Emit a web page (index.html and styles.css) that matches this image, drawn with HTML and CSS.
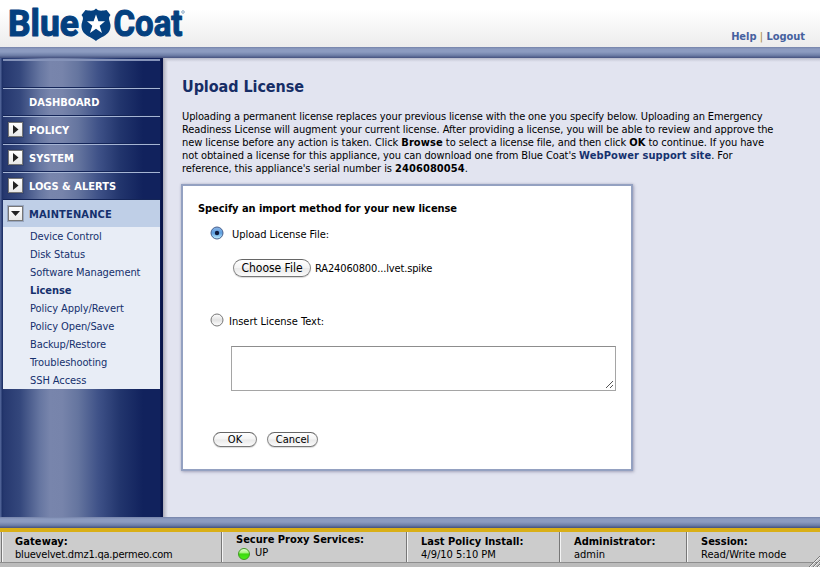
FILE: index.html
```html
<!DOCTYPE html>
<html lang="en">
<head>
<meta charset="utf-8">
<title>Upload License</title>
<link rel="stylesheet" href="styles.css">
</head>
<body>
<header class="header">
  <svg class="logo" width="190" height="47" viewBox="0 0 190 47">
    <g class="logo-type">
      <text x="8" y="36.3" textLength="71" lengthAdjust="spacingAndGlyphs">Blue</text>
      <text x="113.500" y="36.300" textLength="69" lengthAdjust="spacingAndGlyphs">Coat</text>
    </g>
    <path class="shield" d="M96 8.500C94 11 91.500 10.800 88 10.500L85.500 10L81.500 15C84.500 18 82 21 81.500 25C81 35 90 36 96 41C102 36 111 35 110.500 25C110 21 107.500 18 110.500 15L106.500 10L104 10.500C100.500 10.800 98 11 96 8.500Z"/>
    <path class="star" d="M96 14.500L98.400 21.300H105L99.700 25.800L102 33L96 28.700L90 33L92.300 25.800L87 21.300H93.600Z"/>
    <circle class="reg" cx="183" cy="12" r="1.300"/>
  </svg>
  <nav class="account"><a>Help</a> <i>|</i> <a>Logout</a></nav>
</header>
<div class="bar"></div>
<div class="body">
  <aside class="sidebar">
    <div class="nav">
      <div class="nav-top"></div>
      <div class="row"><span class="no-toggle"></span>DASHBOARD</div>
      <div class="row"><svg class="toggle" width="15" height="15"><path d="M5 3L10.500 7.500L5 12Z"/></svg>POLICY</div>
      <div class="row"><svg class="toggle" width="15" height="15"><path d="M5 3L10.500 7.500L5 12Z"/></svg>SYSTEM</div>
      <div class="row"><svg class="toggle" width="15" height="15"><path d="M5 3L10.500 7.500L5 12Z"/></svg><span class="tight">LOGS &amp; ALERTS</span></div>
      <div class="row open"><svg class="toggle" width="15" height="15"><path d="M3 5H12L7.500 10Z"/></svg><span class="wide">MAINTENANCE</span></div>
      <ul class="submenu">
        <li>Device Control</li>
        <li>Disk Status</li>
        <li>Software Management</li>
        <li class="current">License</li>
        <li>Policy Apply/Revert</li>
        <li>Policy Open/Save</li>
        <li>Backup/Restore</li>
        <li>Troubleshooting</li>
        <li>SSH Access</li>
      </ul>
    </div>
  </aside>
  <main class="content">
    <h1>Upload License</h1>
    <p class="intro">Uploading a permanent license replaces your previous license with the one you specify below. Uploading an Emergency<br><span class="l2">Readiness License will augment your current license. After providing a license, you will be able to review and approve the</span><br><span class="l3">new license before any action is taken. Click <b>Browse</b> to select a license file, and then click <b>OK</b> to continue. If you have</span><br><span class="l2">not obtained a license for this appliance, you can download one from Blue Coat's <a>WebPower support site</a>. For</span><br><span class="l3">reference, this appliance's serial number is <b>2406080054</b>.</span></p>
    <form class="panel">
      <h2>Specify an import method for your new license</h2>
      <div class="option">
        <svg class="radio" width="14" height="14" viewBox="0 0 14 14">
          <defs>
            <linearGradient id="on" x2="0" y2="1"><stop offset="0" stop-color="#8cb4e4"/><stop offset=".5" stop-color="#5c9fe0"/><stop offset="1" stop-color="#c5f2ff"/></linearGradient>
            <linearGradient id="off" x2="0" y2="1"><stop offset="0" stop-color="#fff"/><stop offset=".5" stop-color="#e2e2e2"/><stop offset="1" stop-color="#fff"/></linearGradient>
          </defs>
          <circle cx="7" cy="7" r="6" fill="url(#on)" stroke="#48618f"/><circle cx="7" cy="7" r="2.200" fill="#101c3c"/>
        </svg>
        <label class="upload-label">Upload License File:</label>
      </div>
      <div class="file"><span class="button choose">Choose File</span><span class="filename">RA24060800...lvet.spike</span></div>
      <div class="option">
        <svg class="radio" width="14" height="14" viewBox="0 0 14 14"><circle cx="7" cy="7" r="6" fill="url(#off)" stroke="#777"/></svg>
        <label class="insert-label">Insert License Text:</label>
      </div>
      <div class="textarea"><svg width="9" height="9" viewBox="0 0 9 9"><path d="M1 8L8 1M5 8L8 5"/></svg></div>
      <div class="actions"><span class="button ok">OK</span><span class="button cancel">Cancel</span></div>
    </form>
  </main>
</div>
<div class="bar"></div>
<div class="gold"></div>
<footer class="status">
  <div class="cell gateway"><b>Gateway:</b><span>bluevelvet.dmz1.qa.permeo.com</span></div>
  <div class="cell proxy"><b>Secure Proxy Services:</b><span class="health"><i class="led"></i>UP</span></div>
  <div class="cell policy"><b>Last Policy Install:</b><span>4/9/10 5:10 PM</span></div>
  <div class="cell admin"><b>Administrator:</b><span>admin</span></div>
  <div class="cell session"><b>Session:</b><span>Read/Write mode</span></div>
</footer>
<div class="foot"></div>
<svg class="grip" width="12" height="12" viewBox="0 0 12 12"><path class="light" d="M2 12L12 2M6 12L12 6M10 12L12 10"/><path d="M1 12L12 1M5 12L12 5M9 12L12 9"/></svg>
</body>
</html>
```
FILE: styles.css
```css
* { box-sizing: border-box; }
body {
  margin: 0;
  width: 820px;
  height: 567px;
  overflow: hidden;
  display: flex;
  flex-direction: column;
  font: 11px/13px "DejaVu Sans Condensed", "DejaVu Sans", sans-serif;
  font-stretch: condensed;
  color: #000;
  background: #e2e4f0;
}
h1, h2, p, ul { margin: 0; padding: 0; list-style: none; }
svg { display: block; flex: none; }

.header {
  height: 47px;
  display: flex;
  justify-content: space-between;
  background: linear-gradient(#fff 0, #fff 20%, #ececec);
}
.logo-type text { font: 700 36px Roboto, sans-serif; fill: #04407f; stroke: #04407f; stroke-width: 1.1; stroke-linejoin: round; }
.shield { fill: #04407f; }
.star { fill: #fff; }
.reg { fill: none; stroke: #6f93b8; stroke-width: .8; }
.account { padding: 30px 15px 0 0; font-weight: 700; color: #46619f; white-space: pre; letter-spacing: -.05px; }
.account i { font-style: normal; font-weight: 400; color: #a98a3c; }

.bar {
  height: 11px;
  flex: none;
  background: linear-gradient(#7583a9 0, #8c9bc0 18%, #8c9bc0 45%, #6f7fa8 75%, #44517e 100%);
}

.body { height: 459px; display: flex; }
.sidebar {
  width: 163px;
  padding: 1px 3px 0;
  background: linear-gradient(90deg, #4d6094 0, #4d6094 1px, #1e3167 2px, #26386f 4px, #34477c 20px, #6676a1 40px, #7885ac 50px, #7784ab 62px, #65759f 78px, #3f5288 98px, #22356d 120px, #11225d 143px, #11225d 160px, #08154a 161px);
}
.nav-top { height: 29px; border-top: 2px solid #8593b9; border-bottom: 1px solid #142558; }
.row {
  height: 28px;
  padding-left: 5px;
  display: flex;
  align-items: center;
  border-top: 1px solid #a6b5d4;
  border-bottom: 1px solid #142558;
  color: #fff;
  font-weight: 700;
}
.toggle { margin: 0 6px 1px 0; background: linear-gradient(#fff, #e8e8e8); border: 1px solid #777; box-shadow: 0 0 0 1px rgba(40, 48, 75, .25); overflow: hidden; }
.toggle path { fill: #222; transform: translate(-1px, -1px); }
.no-toggle { width: 21px; }
.tight { letter-spacing: .02px; }
.wide { letter-spacing: .15px; }
.row.open { height: 27px; border: 0; padding-top: 1px; background: #bfcfe7; color: #15306d; }
.submenu { background: #e8edf6; color: #15306d; }
.submenu li { height: 18px; padding: 1px 0 0 27px; line-height: 18px; letter-spacing: -.08px; }
.submenu .current { font-weight: 700; }

.content {
  flex: 1;
  padding: 19px 0 0 18px;
  background: linear-gradient(90deg, #aaa9b5 0, #c4c5d2 2px, rgba(226, 228, 240, 0) 5px), linear-gradient(#b7bacb 0, #d0d2df 2px, #e2e4f0 4px);
}
h1 { font-size: 16px; line-height: 19px; color: #162d66; margin-left: 1px; letter-spacing: -.06px; }
.intro { margin: 14px 0 0 1px; white-space: nowrap; letter-spacing: -.12px; }
.l2 { letter-spacing: -.1px; }
.l3 { letter-spacing: -.08px; }
.intro b { letter-spacing: .1px; }
.intro a { font-weight: 700; color: #16326f; letter-spacing: .09px; }

.panel {
  width: 452px;
  height: 287px;
  margin-top: 9px;
  padding: 16px 15px 0;
  background: #fff;
  border: 2px solid #94a1c1;
  box-shadow: 1px 1px 3px rgba(90, 90, 125, .4), 0 0 2px rgba(90, 90, 125, .25);
}
h2 { font-size: 11px; line-height: 13px; letter-spacing: -.06px; }
.option { display: flex; height: 20px; margin-left: 12px; }
h2 + .option { margin-top: 11px; }
.upload-label { margin: 2px 0 0 8px; letter-spacing: -.05px; }
.insert-label { margin: 2px 0 0 5px; }
.file { display: flex; align-items: center; height: 19px; margin: 13px 0 35px 35px; }
.button {
  display: flex;
  align-items: center;
  justify-content: center;
  height: 16px;
  border: 1px solid #777;
  border-color: #666 #888 #777;
  border-radius: 10px;
  background: linear-gradient(#fff 0, #f4f4f4 48%, #e9e9e9 52%, #fbfbfb);
  box-shadow: 0 1px 1px rgba(0, 0, 0, .15);
}
.choose { width: 78px; height: 18px; margin-bottom: 1px; font-size: 12px; letter-spacing: -.02px; }
.filename { margin-left: 4px; letter-spacing: -.14px; }
.textarea {
  width: 385px;
  height: 45px;
  margin: 13px 0 0 33px;
  padding: 0 1px 1px 0;
  display: flex;
  justify-content: flex-end;
  align-items: flex-end;
  border: 1px solid #a5a5a5;
  border-top-color: #8d8d8d;
}
.textarea path, .grip path { stroke: #555; fill: none; }
.actions { display: flex; gap: 10px; margin: 41px 0 0 15px; }
.actions .button { height: 15px; }
.ok { width: 44px; }
.cancel { width: 51px; }

.gold { height: 4px; flex: none; background: #d9af17; }
.status { height: 31px; flex: none; display: flex; background: #ccc; border-bottom: 1px solid #8e8e8e; padding-left: 1px; }
.cell { display: flex; flex-direction: column; padding: 3px 0 0 13px; border-left: 1px solid #777; box-shadow: inset 1px 0 #f4f4f4; }
.gateway { width: 220px; letter-spacing: -.2px; }
.gateway b { letter-spacing: .1px; }
.proxy { width: 185px; padding-top: 1px; padding-left: 14px; }
.policy { width: 153px; padding-left: 14px; }
.admin { width: 127px; padding-left: 14px; }
.session { flex: 1; padding-left: 14px; }
.health { display: flex; }
.led {
  width: 12px;
  height: 12px;
  margin: 2px 5px 0 2px;
  border-radius: 50%;
  border: 1px solid #3f9a20;
  background: linear-gradient(#e3ffd2 0, #a4f57c 38%, #3cd90d 50%, #48ee15);
}
.foot { height: 4px; flex: none; background: #bbb; }
/* window resize handle over the status bar corner */
.grip { position: absolute; right: 0; bottom: 0; }
.grip path { stroke: #777; }
.grip .light { stroke: #eee; }
```
